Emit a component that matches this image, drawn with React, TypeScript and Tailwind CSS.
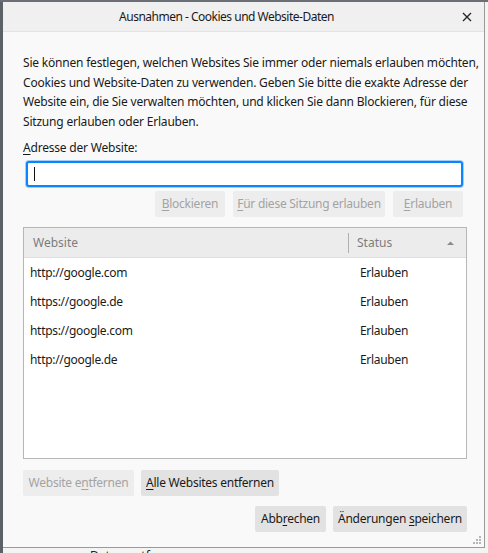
const sites = [
  { url: 'http://google.com', status: 'Erlauben' },
  { url: 'https://google.de', status: 'Erlauben' },
  { url: 'https://google.com', status: 'Erlauben' },
  { url: 'http://google.de', status: 'Erlauben' },
];

// access key letter
const U = ({ children }: { children: string }) => <span className="underline underline-offset-2">{children}</span>;

function Button({ children, disabled, className = '' }: { children: React.ReactNode; disabled?: boolean; className?: string }) {
  return (
    <button
      className={`h-[26px] px-1 rounded-[2px] text-[12px] tracking-[-0.25px] whitespace-nowrap ${
        disabled ? 'bg-[#ededed] text-[#a3a3a3]' : 'bg-[#e2e2e2] text-[#1a1a1a]'
      } ${className}`}
    >
      {children}
    </button>
  );
}

export default function App() {
  return (
    <div
      className="w-[488px] h-[553px] overflow-hidden bg-[#f4f4f4] relative"
      style={{ fontFamily: '"Noto Sans", "Open Sans", sans-serif' }}
    >
      <div className="absolute left-0 top-0 w-[3px] h-full bg-[#5d6168]" />
      <div className="absolute left-0 top-0 w-full h-[2px] bg-[#6b6f75]" />
      <div className="absolute left-[90px] top-[549px] text-[12px] leading-[14px] text-[#222]">Daten entfernen</div>

      <div className="relative ml-[3px] mt-[2px] w-[482px] h-[546px] bg-[#f9f9f9] border border-[#9a9a9a] border-t-0 border-l-0 flex flex-col">
        <div className="h-[30px] shrink-0 bg-[#f0f0f0] border-b border-[#e3e3e3] flex items-center justify-center pr-[34px] relative">
          <span className="text-[12px] tracking-[-0.5px] text-[#1a1a1a]">Ausnahmen - Cookies und Website-Daten</span>
          <svg className="absolute right-[12px] top-[10px]" width="10" height="10" viewBox="0 0 10 10">
            <path d="M1 1L9 9M9 1L1 9" stroke="#222" strokeWidth="1.3" />
          </svg>
        </div>

        <div className="pl-[20px] pr-[17px] pt-[21px] flex flex-col flex-1">
          <p className="text-[12px] leading-[19.5px] text-[#1a1a1a] tracking-[-0.2px] whitespace-nowrap">
            Sie können festlegen, welchen Websites Sie immer oder niemals erlauben möchten,
            <br />
            Cookies und Website-Daten zu verwenden. Geben Sie bitte die exakte Adresse der
            <br />
            Website ein, die Sie verwalten möchten, und klicken Sie dann Blockieren, für diese
            <br />
            Sitzung erlauben oder Erlauben.
          </p>

          <label className="mt-[9px] text-[12px] tracking-[-0.2px] text-[#1a1a1a] leading-[16px]">
            <U>A</U>dresse der Website:
          </label>
          <div className="mt-[5px] ml-[3px] mr-[4px] h-[26px] rounded-[3px] border-2 border-[#0a84ff] bg-white shadow-[0_0_0_1px_#a6cdf5] flex items-center pl-[6px]">
            <div className="w-[1px] h-[14px] bg-[#111]" />
          </div>

          <div className="mt-[4px] mr-[4px] flex justify-end gap-[8px]">
            <Button disabled className="w-[70px]"><U>B</U>lockieren</Button>
            <Button disabled className="w-[152px]"><U>F</U>ür diese Sitzung erlauben</Button>
            <Button disabled className="w-[70px]"><U>E</U>rlauben</Button>
          </div>

          <div className="mt-[10px] h-[232px] border border-[#b7b7b7] bg-white flex flex-col">
            <div className="h-[30px] shrink-0 bg-[#ececec] border-b border-[#dedede] flex items-center text-[12px] text-[#7c7c7c]">
              <div className="flex-1 pl-[9px]">Website</div>
              <div className="w-px h-[20px] bg-[#b0b0b0]" />
              <div className="w-[117px] pl-[8px] pr-[12px] flex items-center justify-between">
                <span>Status</span>
                <svg width="7" height="4" viewBox="0 0 7 4">
                  <path d="M0 4L3.5 0.5L7 4Z" fill="#8a8a8a" />
                </svg>
              </div>
            </div>
            {sites.map((s) => (
              <div key={s.url} className="h-[29px] flex items-center text-[12px] tracking-[-0.3px] text-[#1a1a1a] first:mt-[-0.5px]">
                <div className="flex-1 pl-[6px]">{s.url}</div>
                <div className="w-[106px]">{s.status}</div>
              </div>
            ))}
          </div>

          <div className="mt-[11px] flex gap-[7px]">
            <Button disabled className="w-[111px]">Website e<U>n</U>tfernen</Button>
            <Button className="w-[138px]"><U>A</U>lle Websites entfernen</Button>
          </div>

          <div className="mt-[10px] flex justify-end gap-[7px]">
            <Button className="w-[71px]">Abb<U>r</U>echen</Button>
            <Button className="w-[134px]">Änderungen <U>s</U>peichern</Button>
          </div>
        </div>

        <svg className="absolute right-[2px] bottom-[2px]" width="9" height="9" viewBox="0 0 9 9">
          <g fill="#b5b5b5">
            <rect x="6" y="0" width="2" height="2" />
            <rect x="3" y="3" width="2" height="2" />
            <rect x="6" y="3" width="2" height="2" />
            <rect x="0" y="6" width="2" height="2" />
            <rect x="3" y="6" width="2" height="2" />
            <rect x="6" y="6" width="2" height="2" />
          </g>
        </svg>
      </div>
    </div>
  );
}
